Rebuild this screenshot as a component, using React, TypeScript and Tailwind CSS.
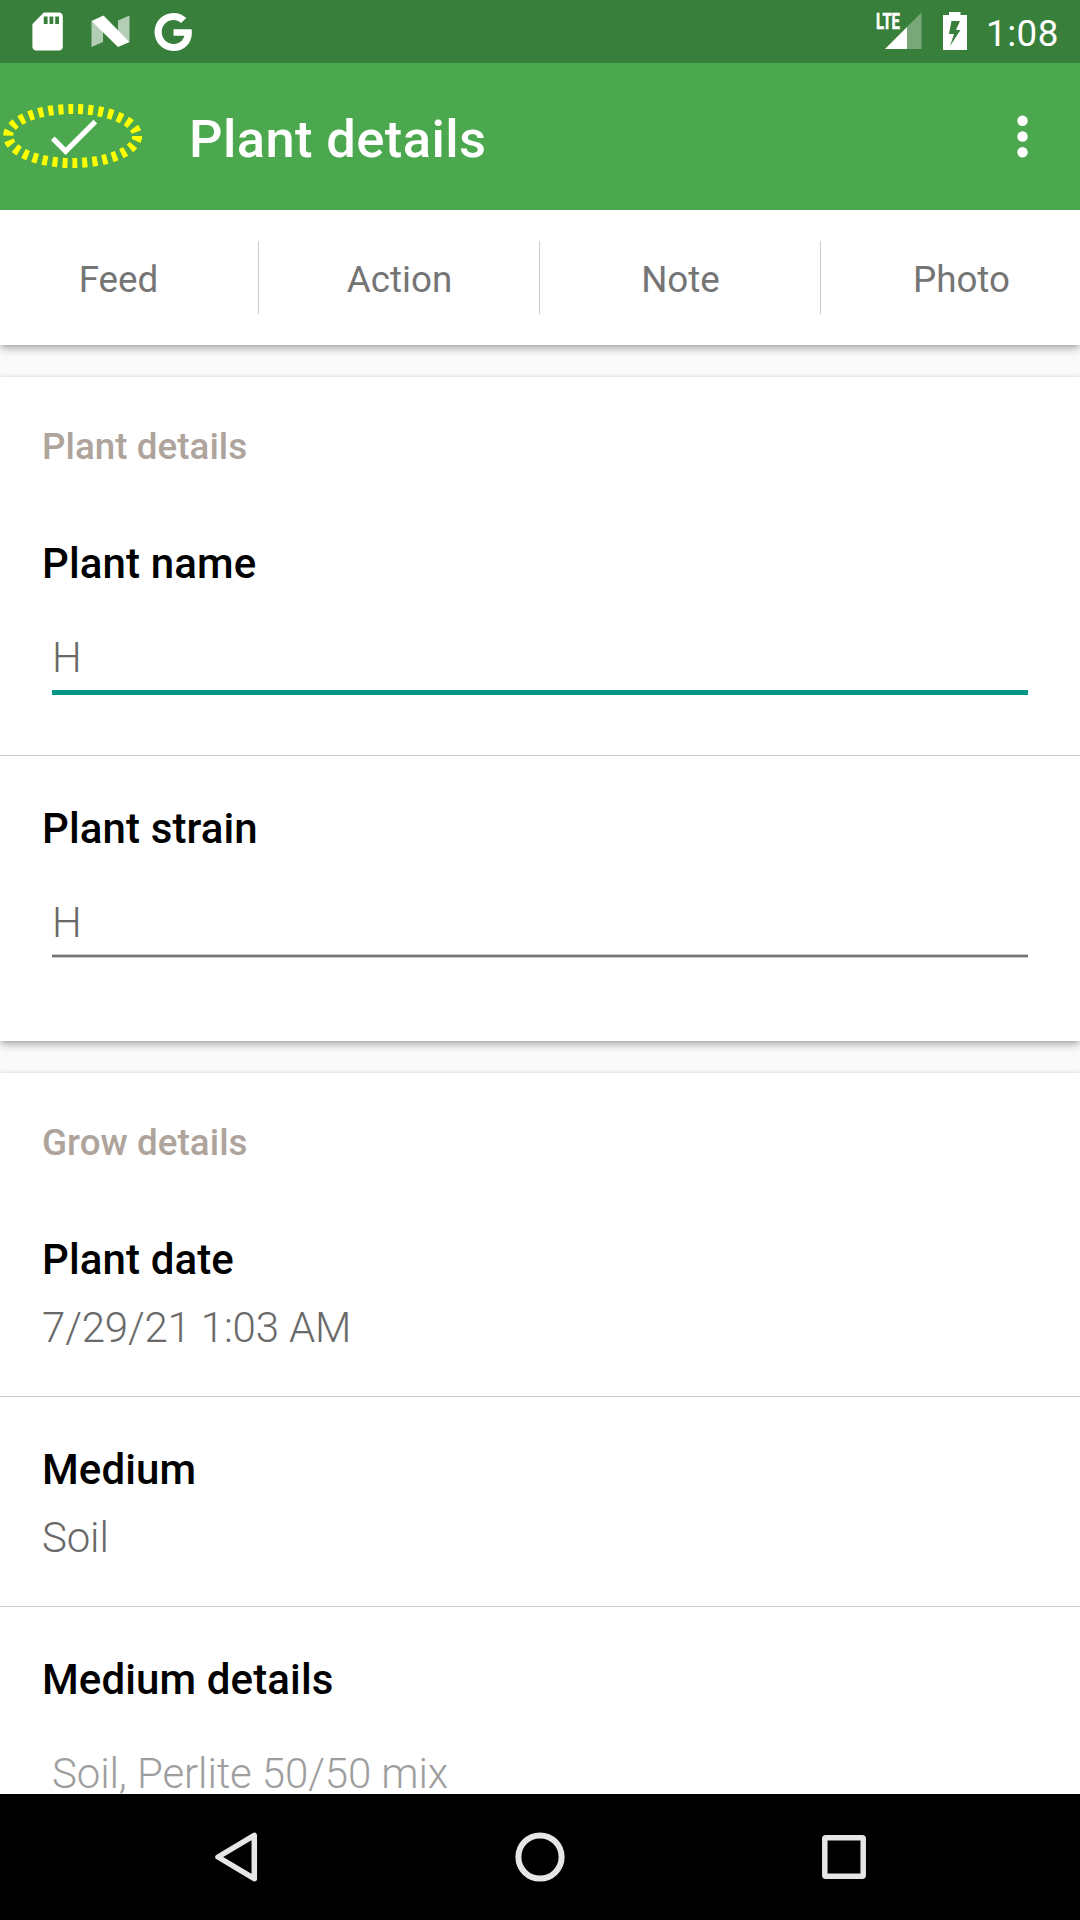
import React from "react";

function StatusBar() {
  return (
    <div className="flex h-[63px] shrink-0 items-start justify-between bg-[#387f3b] text-white">
      <svg width="220" height="63" viewBox="0 0 220 63" fill="currentColor">
        <g transform="translate(24.8 8.8) scale(1.9)">
          <path d="M18 2h-8L4 8v12c0 1.1.9 2 2 2h12c1.1 0 2-.9 2-2V4c0-1.1-.9-2-2-2zm-6 6h-2V4h2v4zm3 0h-2V4h2v4zm3 0h-2V4h2v4z" />
        </g>
        <path opacity=".62" d="M91.5 21v26l11.5-5V31zM118 20.500l11.500-5V42L118 31z" />
        <path d="M91.5 21l12-5.500L129.500 42 118 47z" />
        <path
          transform="translate(154.5 12.4) scale(.0766)"
          d="M488 261.8C488 403.3 391.1 504 248 504 110.8 504 0 393.2 0 256S110.8 8 248 8c66.8 0 123 24.5 166.3 64.9l-67.5 64.9C258.5 52.6 94.3 116.6 94.3 256c0 86.5 69.1 156.6 153.7 156.6 98.2 0 135-70.4 140.8-106.9H248v-85.3h236.1c2.3 12.7 3.9 24.9 3.9 41.4z"
        />
      </svg>
      <div className="flex">
        <svg width="116" height="63" viewBox="870 0 116 63" fill="currentColor">
          <text
            x="876"
            y="29"
            fontSize="22.5"
            fontWeight="700"
            textLength="24"
            lengthAdjust="spacingAndGlyphs"
            stroke="currentColor"
            strokeWidth=".6"
          >
            LTE
          </text>
          <path d="M885 49l22-22v22z" />
          <path opacity=".32" d="M907 27l14.5-14.5V49H907z" />
          <path
            fillRule="evenodd"
            d="M949 12h11.5v3H967v35h-24V15h6zM951.5 21l-2.500 13h5l-4 12 10.500-16h-4.500l4-9z"
          />
        </svg>
        <span className="mt-[11px] w-[94px] text-[36.75px] leading-[45px] tracking-[0.5px]">1:08</span>
      </div>
    </div>
  );
}

function AppBar() {
  return (
    <header className="relative flex h-[147px] shrink-0 items-center bg-[#4ba84e] pr-[26px] pl-[42px] text-white">
      <svg width="63" height="63" viewBox="0 0 24 24" fill="currentColor">
        <path d="M9 16.2L4.8 12l-1.400 1.400L9 19 21 7l-1.400-1.400L9 16.200z" />
      </svg>
      <svg className="absolute top-[36px] left-0" width="146" height="74" viewBox="0 0 146 74" fill="none">
        <ellipse cx="72.6" cy="37" rx="64.5" ry="27" stroke="#ffff00" strokeWidth="10" strokeDasharray="5 5" />
      </svg>
      <h1 className="ml-[84px] flex-1 pt-[5px] text-[52.5px] leading-[62px] font-medium tracking-[0.4px]">Plant details</h1>
      <svg width="63" height="63" viewBox="0 0 24 24" fill="currentColor">
        <circle cx="12" cy="6" r="2" />
        <circle cx="12" cy="12" r="2" />
        <circle cx="12" cy="18" r="2" />
      </svg>
    </header>
  );
}

const shadow = "shadow-[0_5px_8px_-1px_rgba(0,0,0,0.27),0_0_5px_rgba(0,0,0,0.14)]";

function Tabs() {
  return (
    <nav className={`h-[135px] shrink-0 bg-white pt-[31px] ${shadow}`}>
      <div className="-mx-[22px] flex">
        {["Feed", "Action", "Note", "Photo"].map((label) => (
          <div
            key={label}
            className="h-[73px] flex-1 border-r border-[#cccccc] pt-[4px] pl-px text-center text-[36.75px] leading-[69px] text-[#757575] last:border-transparent"
          >
            {label}
          </div>
        ))}
      </div>
    </nav>
  );
}

function Card({ title, className, children }: { title: string; className: string; children: React.ReactNode }) {
  return (
    <section className={`mt-[32px] shrink-0 bg-white pt-[48px] ${shadow} ${className}`}>
      <h2 className="mb-[22px] px-[42px] text-[36.75px] leading-[44px] font-medium tracking-[0.05px] text-[#aea49c]">
        {title}
      </h2>
      {children}
    </section>
  );
}

function Label({ children }: { children: string }) {
  return <div className="text-[42px] leading-[50px] font-medium tracking-[0.12px] text-black">{children}</div>;
}

function ValueRow({ label, value }: { label: string; value: string }) {
  return (
    <div className="h-[210px] border-b border-[#cccccc] px-[42px] pt-[48px]">
      <Label>{label}</Label>
      <div className="mt-[18px] text-[42px] leading-[50px] font-light tracking-[-0.16px] text-[#696969]">{value}</div>
    </div>
  );
}

function InputRow({
  label,
  value,
  tone,
  className,
  line,
}: {
  label: string;
  value: string;
  tone: string;
  className: string;
  line: string;
}) {
  return (
    <div className={`px-[42px] pt-[48px] ${className}`}>
      <Label>{label}</Label>
      <div className={`mx-[10px] mt-[44px] text-[42px] leading-[50px] font-light tracking-[-0.11px] ${tone}`}>{value}</div>
      <div className={`mx-[10px] ${line}`} />
    </div>
  );
}

function NavBar() {
  return (
    <footer className="relative flex h-[126px] shrink-0 items-center justify-between bg-black px-[204px] text-[#e6e6e6]">
      <svg width="64" height="64" viewBox="0 0 64 64" fill="none" stroke="currentColor" strokeWidth="5.5" strokeLinejoin="round">
        <path d="M14 32L50.300 10.300V53.700z" />
      </svg>
      <svg width="64" height="64" viewBox="0 0 64 64" fill="none" stroke="currentColor" strokeWidth="6">
        <circle cx="32" cy="32" r="21.6" />
      </svg>
      <svg width="64" height="64" viewBox="0 0 64 64" fill="none" stroke="currentColor" strokeWidth="5.5" strokeLinejoin="round">
        <rect x="12.8" y="12.8" width="38.4" height="38.4" rx="1" />
      </svg>
    </footer>
  );
}

export default function App() {
  return (
    <div className="flex h-[1920px] w-[1080px] flex-col overflow-hidden bg-[#fafafa] font-[Roboto,sans-serif]">
      <StatusBar />
      <AppBar />
      <main className="flex min-h-0 flex-1 flex-col overflow-hidden">
        <Tabs />
        <Card title="Plant details" className="h-[664px]">
          <InputRow
            label="Plant name"
            value="H"
            tone="text-[#696969]"
            className="h-[265px] border-b border-[#cccccc]"
            line="mt-[7px] h-[5px] bg-[#009688]"
          />
          <InputRow
            label="Plant strain"
            value="H"
            tone="text-[#696969]"
            className=""
            line="mt-[6px] h-[4px] border-y border-[#cccccc] bg-[#737373]"
          />
        </Card>
        <Card title="Grow details" className="">
          <ValueRow label="Plant date" value="7/29/21 1:03 AM" />
          <ValueRow label="Medium" value="Soil" />
          <InputRow
            label="Medium details"
            value="Soil, Perlite 50/50 mix"
            tone="text-[#9e9e9e]"
            className="h-[265px]"
            line="mt-[6px] h-[4px] border-y border-[#cccccc] bg-[#737373]"
          />
        </Card>
      </main>
      <NavBar />
    </div>
  );
}
